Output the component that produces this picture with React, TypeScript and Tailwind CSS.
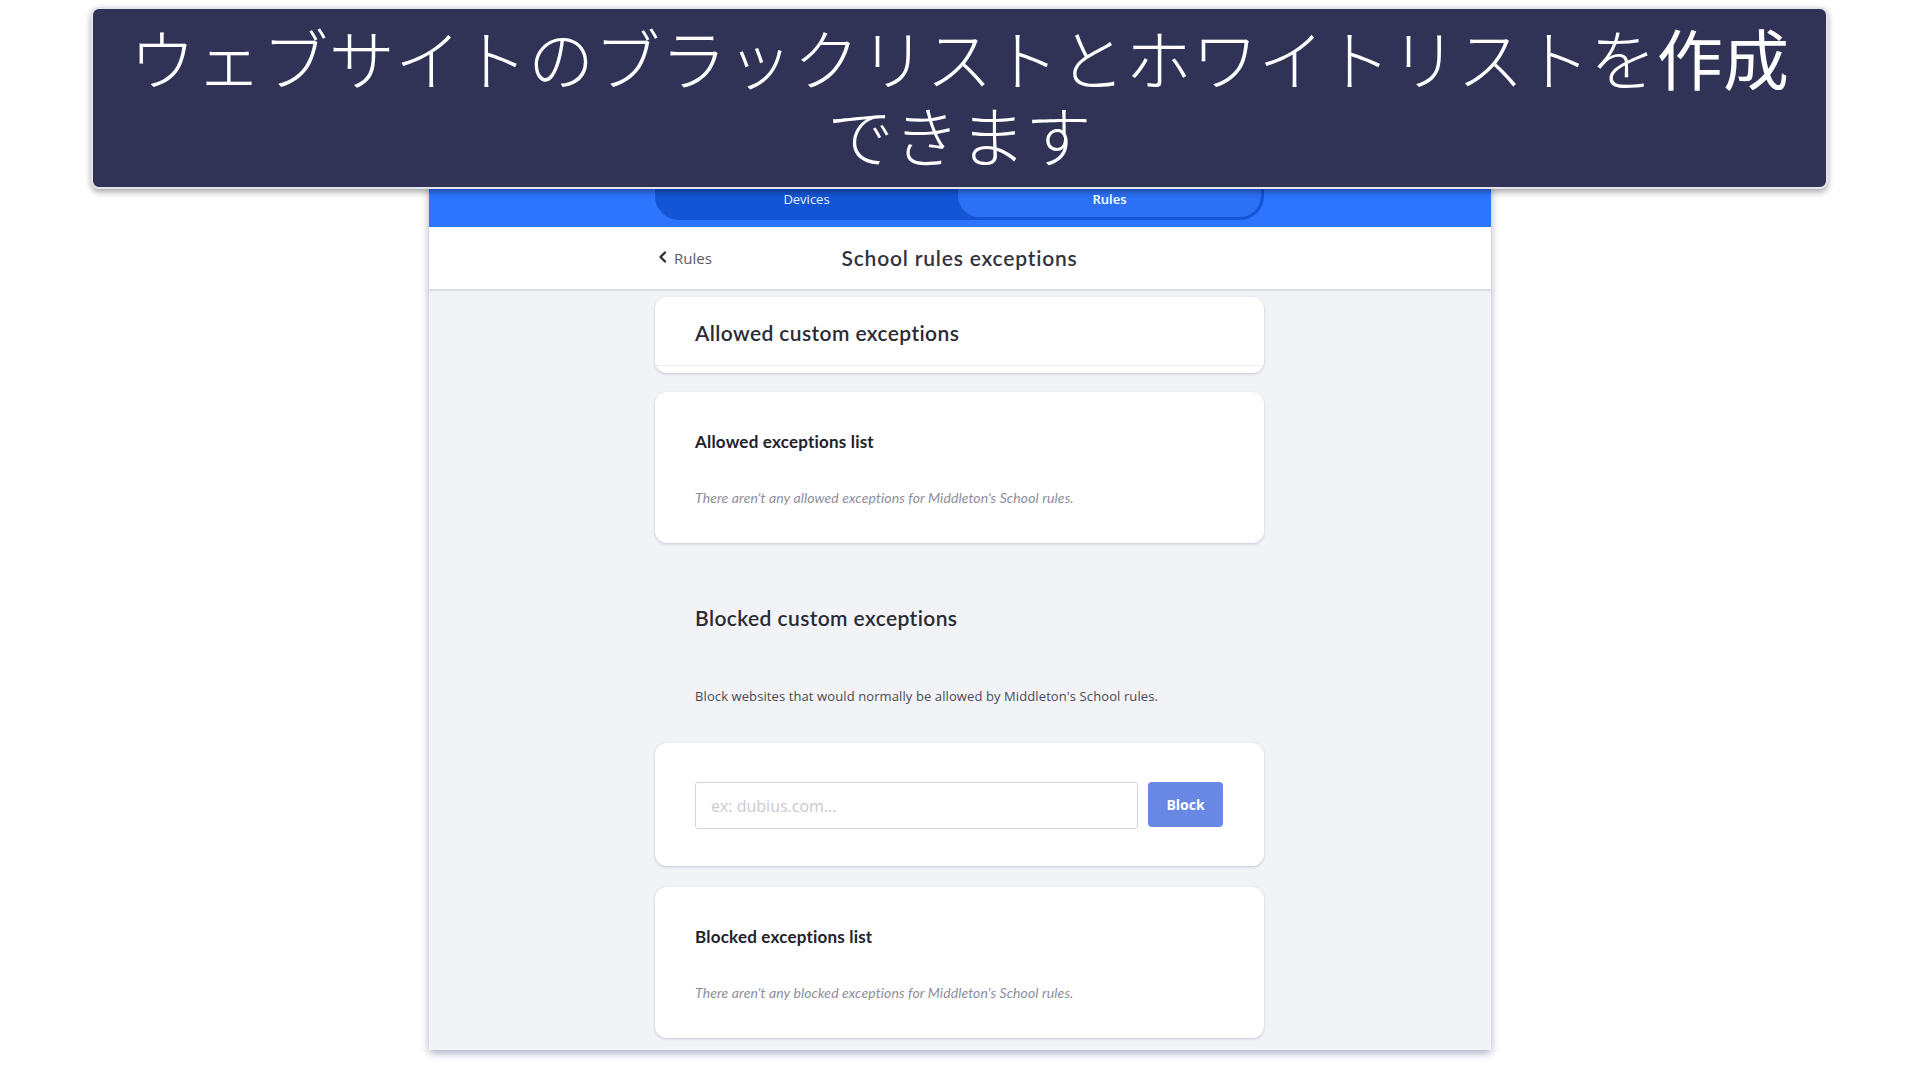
import React from "react";

const ui = { fontFamily: "Lato, 'Noto Sans', sans-serif" };
const seg = { fontFamily: "'Open Sans', 'Noto Sans', sans-serif" };

function Card({ className = "", children }: { className?: string; children: React.ReactNode }) {
  return (
    <div className={`w-[609px] rounded-[12px] bg-white shadow-[0_1px_3px_rgba(40,40,80,0.22)] ${className}`}>
      {children}
    </div>
  );
}

export default function App() {
  return (
    <div className="relative min-h-[1067px] w-full overflow-hidden bg-white" style={ui}>
      {/* Phone/web panel */}
      <div className="flex justify-center pt-[150px]">
        <div className="w-[1062px] bg-[#f2f3f7] shadow-[0_3px_8px_rgba(70,70,120,0.45)]">
          {/* Blue top bar with segment */}
          <div className="flex h-[77px] justify-center bg-[#2d74ff]">
            <div className="flex h-[70px] w-[609px] rounded-b-[24px] bg-[#1455d6] pb-[3px] pr-[3px]" style={seg}>
              <div className="flex flex-1 items-end justify-center pb-[10px] text-[13px] leading-[16px] text-white/90">
                Devices
              </div>
              <div className="flex flex-1 items-end justify-center rounded-b-[21px] bg-[#2c70f6] pb-[10px] text-[13px] font-semibold leading-[16px] text-white">
                Rules
              </div>
            </div>
          </div>
          {/* Header */}
          <div className="flex h-[64px] justify-center border-b-2 border-[#dcdee4] bg-white">
            <div className="grid w-[609px] grid-cols-[1fr_auto_1fr] items-center">
              <div className="flex items-center gap-[6px] pl-[3px] text-[15px] text-[#5a5a66]" style={seg}>
                <svg width="10" height="12" viewBox="0 0 10 12" className="mt-[-2px]">
                  <path d="M7 1.5 L2.5 6 L7 10.5" fill="none" stroke="#333" strokeWidth="2.4" strokeLinecap="round" strokeLinejoin="round" />
                </svg>
                <span>Rules</span>
              </div>
              <div className="text-[21px] font-semibold tracking-[0.8px] text-[#33333d]">School rules exceptions</div>
              <div />
            </div>
          </div>
          {/* Content */}
          <div className="flex flex-col items-center pb-[12px] pt-[6px]">
            <Card className="h-[76px]">
              <div className="flex h-[69px] items-center border-b border-[#eceef2] pl-[40px] pt-[4px] text-[21px] font-semibold tracking-[0.4px] text-[#2b2b36]">
                Allowed custom exceptions
              </div>
            </Card>

            <Card className="mt-[19px] h-[151px] pl-[40px] pt-[40px]">
              <div className="text-[17px] font-bold leading-[20px] tracking-[0.2px] text-[#22222c]">Allowed exceptions list</div>
              <div className="mt-[37px] text-[14px] italic leading-[18px] tracking-[0.1px] text-[#8d8d9c]">
                There aren't any allowed exceptions for Middleton's School rules.
              </div>
            </Card>

            <div className="w-[609px] pl-[40px]">
              <div className="mt-[62px] text-[21px] font-semibold leading-[26px] tracking-[0.4px] text-[#2b2b36]">
                Blocked custom exceptions
              </div>
              <div className="mt-[56px] text-[13px] leading-[18px] tracking-[0.1px] text-[#4a4a55]" style={seg}>
                Block websites that would normally be allowed by Middleton's School rules.
              </div>
            </div>

            <Card className="mt-[38px] h-[123px] pl-[40px] pt-[39px]">
              <div className="flex items-start gap-[10px]">
                <div
                  className="flex h-[47px] w-[443px] items-center rounded-[3px] border border-[#d3d3da] pl-[15px] text-[16px] text-[#c9c9d2]"
                  style={seg}
                >
                  ex: dubius.com...
                </div>
                <button
                  className="flex h-[45px] w-[75px] items-center justify-center rounded-[4px] bg-[#6987e5] text-[14px] font-bold text-white"
                  style={seg}
                >
                  Block
                </button>
              </div>
            </Card>

            <Card className="mt-[21px] h-[151px] pl-[40px] pt-[40px]">
              <div className="text-[17px] font-bold leading-[20px] tracking-[0.2px] text-[#22222c]">Blocked exceptions list</div>
              <div className="mt-[37px] text-[14px] italic leading-[18px] tracking-[0.1px] text-[#8d8d9c]">
                There aren't any blocked exceptions for Middleton's School rules.
              </div>
            </Card>
          </div>
        </div>
      </div>

      {/* Caption banner overlay */}
      <div
        className="absolute left-[91px] top-[7px] flex h-[182px] w-[1737px] flex-col items-center justify-center rounded-[8px] border-2 border-[#e4e4ec] bg-[#303256] pb-[7px] text-[66px] font-light leading-[77px] text-white shadow-[0_3px_6px_rgba(0,0,0,0.35)]"
        style={{ fontFamily: "'Noto Sans CJK JP', 'Noto Sans', sans-serif" }}
      >
        <div className="whitespace-nowrap tracking-[0.4px]">
          ウェブサイトのブラックリストとホワイトリストを<span className="font-normal">作成</span>
        </div>
        <div className="whitespace-nowrap">できます</div>
      </div>
    </div>
  );
}
